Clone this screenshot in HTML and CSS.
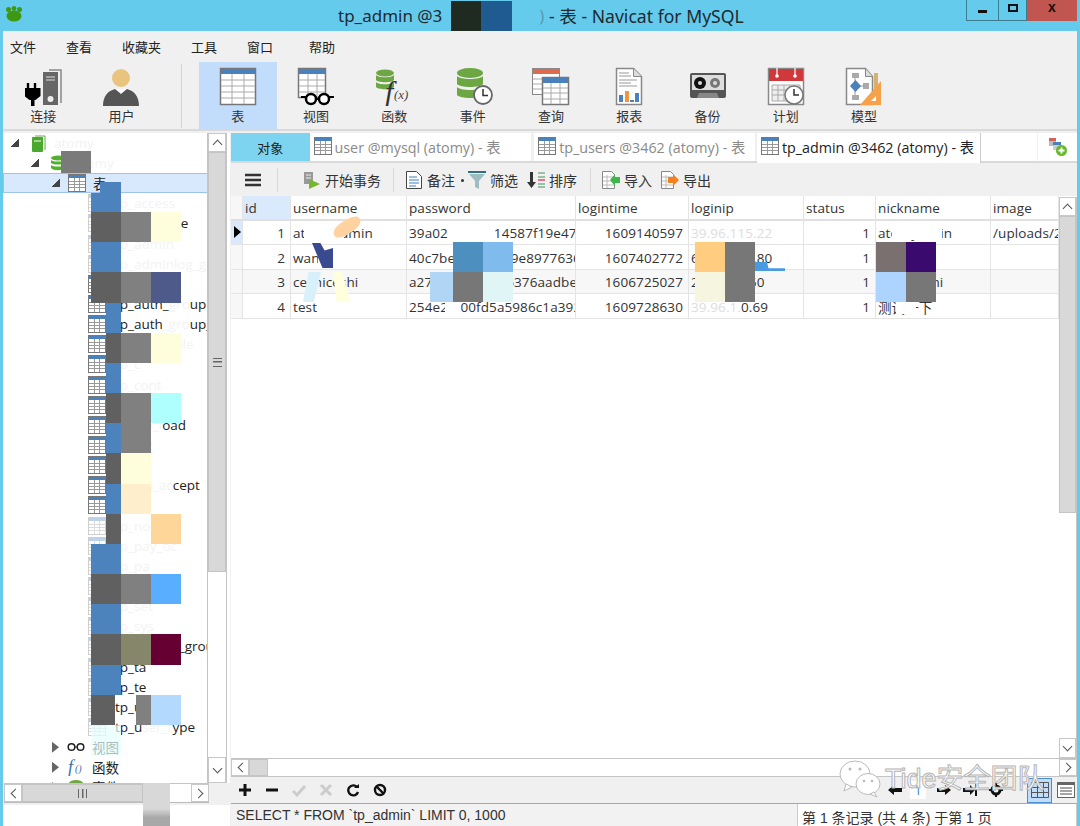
FILE: index.html
```html
<!DOCTYPE html>
<html lang="zh">
<head>
<meta charset="utf-8">
<title>tp_admin - Navicat for MySQL</title>
<link rel="stylesheet" href="styles.css">
</head>
<body>
<svg class="defs" width="0" height="0" aria-hidden="true">
  <symbol id="tbl" viewBox="0 0 18 18">
    <rect x=".5" y=".5" width="17" height="17" fill="#fff" stroke="#777"/>
    <rect x="1" y="1" width="16" height="3" fill="#4a80bb"/>
    <path d="M1 7.5h16M1 10.5h16M1 13.5h16M6.5 4v13M11.5 4v13" stroke="#999" fill="none"/>
  </symbol>
</svg>

<div class="window">
  <header class="titlebar">
    <svg class="applogo" width="18" height="16" viewBox="0 0 18 16"><ellipse cx="9" cy="10" rx="7.5" ry="5.5" fill="#3d9a10"/><circle cx="3.5" cy="3.5" r="2.5" fill="#3d9a10"/><circle cx="9" cy="2.5" r="2.4" fill="#3d9a10"/><circle cx="14.5" cy="3.5" r="2.5" fill="#3d9a10"/></svg>
    <div class="title"><span>tp_admin @3</span><i class="tpatch a"></i><i class="tpatch b"></i><span class="tfade">)</span><span class="ttail">&nbsp;- 表 - Navicat for MySQL</span></div>
    <div class="winbtns">
      <button class="wb min"><i></i></button>
      <button class="wb max"><i></i></button>
      <button class="wb close">x</button>
    </div>
  </header>

  <div class="shell">
    <nav class="menubar">
      <span>文件</span><span>查看</span><span>收藏夹</span><span>工具</span><span>窗口</span><span class="m-help">帮助</span>
    </nav>

    <div class="ribbon">
      <div class="rb"><svg class="ic-conn" width="40" height="40" viewBox="0 0 40 40"><path d="M24 4h12v33" fill="none" stroke="#888" stroke-width="1.5"/><rect x="18" y="6" width="15" height="33" fill="#666"/><path d="M21 11h9M21 14h9" stroke="#ddd"/><circle cx="25.500" cy="33" r="3" fill="#eee"/><path d="M3 17v6M10 17v6" stroke="#000" stroke-width="2.400"/><path d="M0 22h16v8l-5 4H5l-5-4z" fill="#000" transform="translate(-.5)"/><rect x="6" y="33" width="3.500" height="7" fill="#000"/></svg><span>连接</span></div>
      <div class="rb"><svg width="40" height="40" viewBox="0 0 40 40"><circle cx="20" cy="12" r="9" fill="#e8c47e"/><path d="M2 40c0-10 5-15 12-17l6 5 6-5c7 2 12 7 12 17z" fill="#555"/><path d="M14 22l6 5 6-5-6 2z" fill="#fff"/></svg><span>用户</span></div>
      <i class="rsep"></i>
      <div class="rb active"><svg width="40" height="40" viewBox="0 0 40 40"><rect x="2.500" y="2.500" width="35" height="36" fill="#fff" stroke="#777" stroke-width="1.500"/><rect x="3" y="3" width="34" height="5" fill="#4a80bb"/><path d="M3 14h34M3 20h34M3 26h34M3 32h34M14 8v30M26 8v30" stroke="#aaa"/></svg><span>表</span></div>
      <div class="rb"><svg width="40" height="40" viewBox="0 0 40 40"><rect x="2.500" y="2.500" width="27" height="29" fill="#fff" stroke="#777" stroke-width="1.500"/><rect x="3" y="3" width="26" height="5" fill="#4a80bb"/><path d="M3 14h26M3 20h26M3 26h26M12 8v24M21 8v24" stroke="#aaa"/><circle cx="15" cy="33" r="5" fill="#fff" stroke="#000" stroke-width="2.500"/><circle cx="28" cy="33" r="5" fill="#fff" stroke="#000" stroke-width="2.500"/><path d="M5 31h5M33 31h5M20 33h3" stroke="#000" stroke-width="2"/></svg><span>视图</span></div>
      <div class="rb"><svg width="40" height="40" viewBox="0 0 40 40"><ellipse cx="11" cy="7" rx="9" ry="3.500" fill="#6da744"/><path d="M2 9c2 3 16 3 18 0v5c-2 3-16 3-18 0z" fill="#6da744"/><path d="M2 16c2 3 16 3 18 0v5c-2 3-16 3-18 0z" fill="#6da744"/><text class="fx" x="11" y="36">f</text><text class="fxs" x="20" y="33">(x)</text></svg><span>函数</span></div>
      <div class="rb"><svg width="40" height="40" viewBox="0 0 40 40"><ellipse cx="17" cy="7" rx="13" ry="5" fill="#6da744"/><path d="M4 10c3 4 23 4 26 0v8c-3 4-23 4-26 0z" fill="#6da744"/><path d="M4 21c3 4 23 4 26 0v8c-3 4-23 4-26 0z" fill="#6da744"/><circle cx="30" cy="29" r="9" fill="#fff" stroke="#666" stroke-width="1.800"/><path d="M30 23v6.500h5" stroke="#333" stroke-width="1.500" fill="none"/></svg><span>事件</span></div>
      <div class="rb"><svg width="40" height="40" viewBox="0 0 40 40"><rect x="1.500" y="2.500" width="27" height="26" fill="#fff" stroke="#888"/><rect x="2" y="3" width="26" height="5" fill="#e06a50"/><path d="M2 13h10M2 18h10M2 23h10" stroke="#aaa"/><rect x="11.500" y="11.500" width="26" height="27" fill="#fff" stroke="#777" stroke-width="1.500"/><rect x="12" y="12" width="25" height="5" fill="#4a80bb"/><path d="M12 22h25M12 27h25M12 33h25M20 17v21M29 17v21" stroke="#aaa"/></svg><span>查询</span></div>
      <div class="rb"><svg width="40" height="40" viewBox="0 0 40 40"><path d="M7.500 2.500h17l8 8v28h-25z" fill="#fff" stroke="#888" stroke-width="1.500"/><path d="M24.500 2.500v8h8" fill="#ddd" stroke="#888"/><path d="M10 7h10M10 10h12M10 14h18M10 17h12M10 20h18" stroke="#999"/><rect x="10" y="29" width="4" height="7" fill="#4a80bb"/><rect x="16" y="25" width="4" height="11" fill="#f0953c"/><rect x="21" y="34" width="4" height="2" fill="#4a80bb"/><rect x="26" y="27" width="4" height="9" fill="#4a80bb"/></svg><span>报表</span></div>
      <div class="rb"><svg width="40" height="40" viewBox="0 0 40 40"><rect x="2" y="7" width="36" height="25" rx="2" fill="#555"/><rect x="4" y="9" width="32" height="15" fill="#ddd"/><circle cx="12" cy="17" r="6" fill="#111"/><circle cx="12" cy="17" r="2" fill="#ddd"/><circle cx="27" cy="17" r="5" fill="#777"/><circle cx="27" cy="17" r="2" fill="#ddd"/><path d="M9 32l2-5h18l2 5z" fill="#888"/></svg><span>备份</span></div>
      <div class="rb"><svg width="40" height="40" viewBox="0 0 40 40"><rect x="2.500" y="2.500" width="35" height="36" fill="#fff" stroke="#888" stroke-width="1.500"/><rect x="3" y="3" width="34" height="12" fill="#d0393c"/><circle cx="11" cy="10" r="1.800" fill="#fff"/><circle cx="29" cy="10" r="1.800" fill="#fff"/><path d="M11 2v7M29 2v7" stroke="#fff" stroke-width="1.200"/><path d="M6 19h28v16H6zM6 24h28M6 29h28M12 19v16M18 19v16M24 19v16" fill="#eee" stroke="#aaa"/><circle cx="28" cy="29" r="9" fill="#fff" stroke="#777" stroke-width="1.500"/><path d="M28 23v6h5" stroke="#333" stroke-width="1.500" fill="none"/></svg><span>计划</span></div>
      <div class="rb"><svg width="40" height="40" viewBox="0 0 40 40"><path d="M2.500 2.500h19l7 8v28h-26z" fill="#fff" stroke="#888" stroke-width="1.500"/><path d="M21.500 2.500v8h7" fill="#ddd" stroke="#888"/><rect x="8" y="7" width="7" height="5" fill="#aaa"/><rect x="8" y="29" width="7" height="5" fill="#aaa"/><rect x="19" y="17" width="6" height="6" fill="#aaa"/><path d="M11 12v17M14 20h6" stroke="#999"/><path d="M11.500 14l5.500 6-5.500 6-5.500-6z" fill="#4a80bb"/><rect x="30" y="7" width="4" height="20" fill="#d6b070"/><path d="M37 15v24H16z" fill="#f6a24a"/><path d="M32 30v5h-5z" fill="#fff"/></svg><span>模型</span></div>
    </div>

    <main class="workspace">
      <aside class="side">
        <div class="side-top">
          <div class="tree">
            <div class="node l0"><i class="tw"></i><svg width="15" height="17" viewBox="0 0 15 17"><path d="M4 1h10v14" fill="none" stroke="#5fae3c"/><rect x="1" y="2" width="11" height="15" rx="1" fill="#4aa82c"/><path d="M3 6h7" stroke="#fff"/></svg><span class="hid">atomy</span></div>
            <div class="node l1"><i class="tw"></i><svg width="16" height="17" viewBox="0 0 16 17"><ellipse cx="8" cy="3" rx="7" ry="2.600" fill="#54b030"/><path d="M1 5c2 2 12 2 14 0v3c-2 2-12 2-14 0zM1 10c2 2 12 2 14 0v3c-2 3-12 3-14 0z" fill="#54b030"/></svg><span class="hid">atomy</span></div>
            <div class="node l2 sel"><i class="tw"></i><svg width="18" height="18"><use href="#tbl"/></svg><span>表</span></div>
            <div class="kids">
              <div class="node l3"><svg class="dim" width="18" height="18"><use href="#tbl"/></svg><span class="hid">tp_access</span></div>
              <div class="node l3"><svg class="dim" width="18" height="18"><use href="#tbl"/></svg><span>tp_access_e</span></div>
              <div class="node l3"><svg class="dim" width="18" height="18"><use href="#tbl"/></svg><span class="hid">tp_admin</span></div>
              <div class="node l3"><svg class="dim" width="18" height="18"><use href="#tbl"/></svg><span class="hid">tp_adminlog_g</span></div>
              <div class="node l3"><svg width="18" height="18"><use href="#tbl"/></svg><span class="hid">tp_adm</span></div>
              <div class="node l3"><svg width="18" height="18"><use href="#tbl"/></svg><span>tp_auth_</span><span class="hid">gro</span><span>up</span></div>
              <div class="node l3"><svg width="18" height="18"><use href="#tbl"/></svg><span>tp_auth</span><span class="hid">_gro</span><span>up_access</span></div>
              <div class="node l3"><svg width="18" height="18"><use href="#tbl"/></svg><span>tp_auth</span><span class="hid">_rule</span></div>
              <div class="node l3"><svg width="18" height="18"><use href="#tbl"/></svg><span class="hid">tp_c</span></div>
              <div class="node l3"><svg width="18" height="18"><use href="#tbl"/></svg><span class="hid">tp_cont</span></div>
              <div class="node l3"><svg width="18" height="18"><use href="#tbl"/></svg><span class="hid">tp_dept</span></div>
              <div class="node l3"><svg width="18" height="18"><use href="#tbl"/></svg><span class="hid">tp_file_l</span><span>oad</span></div>
              <div class="node l3"><svg width="18" height="18"><use href="#tbl"/></svg><span class="hid">tp_log</span></div>
              <div class="node l3"><svg width="18" height="18"><use href="#tbl"/></svg><span class="hid">tp_m</span></div>
              <div class="node l3"><svg width="18" height="18"><use href="#tbl"/></svg><span class="hid">tp_ms_ac</span><span>cept</span></div>
              <div class="node l3"><svg width="18" height="18"><use href="#tbl"/></svg><span class="hid">tp_n</span></div>
              <div class="node l3"><svg class="dim" width="18" height="18"><use href="#tbl"/></svg><span class="hid">tp_node_t</span></div>
              <div class="node l3"><svg class="dim" width="18" height="18"><use href="#tbl"/></svg><span class="hid">tp_pay_oc</span></div>
              <div class="node l3"><svg class="dim" width="18" height="18"><use href="#tbl"/></svg><span class="hid">tp_pa</span></div>
              <div class="node l3"><svg class="dim" width="18" height="18"><use href="#tbl"/></svg><span class="hid">tp_s</span></div>
              <div class="node l3"><svg class="dim" width="18" height="18"><use href="#tbl"/></svg><span class="hid">tp_set</span></div>
              <div class="node l3"><svg class="dim" width="18" height="18"><use href="#tbl"/></svg><span class="hid">tp_sys</span></div>
              <div class="node l3"><svg class="dim" width="18" height="18"><use href="#tbl"/></svg><span>tp_sys_lan_group</span></div>
              <div class="node l3"><svg class="dim" width="18" height="18"><use href="#tbl"/></svg><span>tp_ta</span></div>
              <div class="node l3"><svg class="dim" width="18" height="18"><use href="#tbl"/></svg><span>tp_te</span></div>
              <div class="node l3"><svg class="dim" width="18" height="18"><use href="#tbl"/></svg><span>tp_u</span></div>
              <div class="node l3"><svg class="dim" width="18" height="18"><use href="#tbl"/></svg><span>tp_u</span><span class="hid">ser_t</span><span>ype</span></div>
            </div>
            <div class="node l2"><i class="tw open"></i><svg width="18" height="10" viewBox="0 0 18 10"><circle cx="4.500" cy="5" r="3.300" fill="none" stroke="#222" stroke-width="1.500"/><circle cx="13.500" cy="5" r="3.300" fill="none" stroke="#222" stroke-width="1.500"/><path d="M8 5h2" stroke="#222"/></svg><span>视图</span></div>
            <div class="node l2"><i class="tw open"></i><svg width="18" height="18" viewBox="0 0 18 18"><text class="fxt" x="1" y="15">f</text><text class="fxb" x="8" y="14">()</text></svg><span>函数</span></div>
            <div class="node l2"><i class="tw open"></i><svg width="18" height="18" viewBox="0 0 18 18"><ellipse cx="9" cy="5" rx="7" ry="3" fill="#6da744"/><path d="M2 7c2 3 12 3 14 0v8H2z" fill="#6da744"/></svg><span>事件</span></div>
          </div>
          <div class="vbar tree-vbar">
            <button class="sb-btn up"></button>
            <div class="thumb tree-thumb"><i class="grip"></i></div>
            <div class="track"></div>
            <button class="sb-btn down"></button>
          </div>
        </div>
        <div class="hbar side-hbar">
          <button class="sb-btn left"></button>
          <div class="hthumb side-thumb"><i class="hgrip"></i></div>
          <div class="track"></div>
          <button class="sb-btn right"></button>
        </div>
        <div class="side-foot"></div>
      </aside>

      <section class="content">
        <div class="tabs">
          <div class="tab obj">对象</div>
          <div class="tab doc t1"><svg width="18" height="18"><use href="#tbl"/></svg><span>user @mysql (atomy) - 表</span></div>
          <div class="tab doc t2"><svg width="18" height="18"><use href="#tbl"/></svg><span>tp_users @3462 (atomy) - 表</span></div>
          <div class="tab doc t3 current"><svg width="18" height="18"><use href="#tbl"/></svg><span>tp_admin @3462 (atomy) - 表</span></div>
          <div class="tab blank"></div>
          <div class="tab add"><svg width="20" height="20" viewBox="0 0 20 20"><rect x="1" y="1" width="7" height="3" fill="#d0605a"/><rect x="1" y="4" width="7" height="5" fill="#bbb"/><rect x="5" y="5" width="8" height="3" fill="#4a80bb"/><rect x="5" y="8" width="8" height="5" fill="#ccc"/><circle cx="13.500" cy="13.500" r="5.500" fill="#66b82c"/><path d="M13.500 10.500v6M10.500 13.500h6" stroke="#fff" stroke-width="1.800"/></svg></div>
        </div>

        <div class="tools">
          <svg class="ham" width="16" height="14" viewBox="0 0 16 14"><path d="M0 2h16M0 7h16M0 12h16" stroke="#333" stroke-width="2.600"/></svg>
          <i class="tsep s1"></i>
          <div class="tool tx"><svg width="18" height="18" viewBox="0 0 18 18"><rect x="1" y="1" width="9" height="12" fill="#999"/><path d="M3 4h5M3 7h5" stroke="#eee"/><path d="M6 8l11 5-11 5z" fill="#74b72a"/></svg><span>开始事务</span></div>
          <i class="tsep s2"></i>
          <div class="tool note"><svg width="16" height="18" viewBox="0 0 16 18"><path d="M.5.500h10l5 5v12H.500z" fill="#fff" stroke="#444"/><path d="M3 6h8M3 9h10M3 12h10M3 15h7" stroke="#3b7fc4"/></svg><span>备注</span><i class="dot"></i></div>
          <div class="tool filter"><svg width="18" height="18" viewBox="0 0 18 18"><rect width="18" height="2" fill="#2f6f83"/><path d="M1 3h16l-6 7v8l-4-2v-6z" fill="#9dbdc0"/></svg><span>筛选</span></div>
          <div class="tool sort"><svg width="18" height="18" viewBox="0 0 18 18"><path d="M3 1h3v10h3l-4.500 6L0 11h3z" fill="#333"/><path d="M11 2h7M11 6h7" stroke="#7fb08c" stroke-width="1.500"/><path d="M11 9h7" stroke="#e0506a" stroke-width="1.500"/><path d="M11 13h7M11 16h7" stroke="#7fb08c" stroke-width="1.500"/></svg><span>排序</span></div>
          <i class="tsep s3"></i>
          <div class="tool imp"><svg width="18" height="18" viewBox="0 0 18 18"><path d="M.500.500h9l3 3v14H.500z" fill="#fff" stroke="#888"/><path d="M1 6h11M1 10h11M1 14h11M5 4v13" stroke="#bbb"/><path d="M18 6v6h-5v3l-5-6 5-6v3z" fill="#3fb54a"/></svg><span>导入</span></div>
          <div class="tool exp"><svg width="18" height="18" viewBox="0 0 18 18"><path d="M.500.500h9l3 3v14H.500z" fill="#fff" stroke="#888"/><path d="M1 6h11M1 10h11M1 14h11M5 4v13" stroke="#bbb"/><path d="M7 6v6h5v3l6-6-6-6v3z" fill="#f5801f"/></svg><span>导出</span></div>
        </div>

        <div class="gridwrap">
          <div class="grid">
            <div class="gh rowh"></div><div class="gh idh">id</div><div class="gh">username</div><div class="gh">password</div><div class="gh">logintime</div><div class="gh">loginip</div><div class="gh">status</div><div class="gh">nickname</div><div class="gh">image</div>

            <div class="gc rowh cur"><i class="arrow"></i></div><div class="gc num">1</div><div class="gc">atom_admin</div><div class="gc">39a02a7c91d14587f19e47c0</div><div class="gc num">1609140597</div><div class="gc faint">39.96.115.22</div><div class="gc num">1</div><div class="gc">atomy_adin</div><div class="gc">/uploads/20</div>

            <div class="gc rowh"></div><div class="gc num">2</div><div class="gc">wangyi.</div><div class="gc">40c7be2d1a03b9e8977636a1</div><div class="gc num">1607402772</div><div class="gc">60.12.130.80</div><div class="gc num">1</div><div class="gc">wangyi</div><div class="gc"></div>

            <div class="gc rowh alt"></div><div class="gc num alt">3</div><div class="gc alt">ceshiceshi</div><div class="gc alt">a27ed8a6fc5286376aadbe0c</div><div class="gc num alt">1606725027</div><div class="gc alt">27.21.10.60</div><div class="gc num alt">1</div><div class="gc alt">ceshiceshi</div><div class="gc alt"></div>

            <div class="gc rowh"></div><div class="gc num">4</div><div class="gc">test</div><div class="gc">254e2f700fd5a5986c1a392e</div><div class="gc num">1609728630</div><div class="gc"><span class="faint">39.96.1.</span>0.69</div><div class="gc num">1</div><div class="gc">测试一下</div><div class="gc"></div>
          </div>
          <div class="vbar grid-vbar">
            <button class="sb-btn up"></button>
            <div class="thumb grid-thumb"></div>
            <div class="track"></div>
            <button class="sb-btn down"></button>
          </div>
        </div>

        <div class="hbar grid-hbar">
          <button class="sb-btn left"></button>
          <div class="hthumb g-thumb"></div>
          <div class="track"></div>
          <button class="sb-btn right"></button>
        </div>

        <div class="nav">
          <svg class="nv" width="14" height="14" viewBox="0 0 14 14"><path d="M7 1v12M1 7h12" stroke="#111" stroke-width="3"/></svg>
          <svg class="nv" width="14" height="14" viewBox="0 0 14 14"><path d="M1 7h12" stroke="#111" stroke-width="3"/></svg>
          <svg class="nv" width="14" height="14" viewBox="0 0 14 14"><path d="M1 8l4 4 8-9" stroke="#ccc" stroke-width="3" fill="none"/></svg>
          <svg class="nv" width="14" height="14" viewBox="0 0 14 14"><path d="M2 2l10 10M12 2L2 12" stroke="#ccc" stroke-width="3"/></svg>
          <svg class="nv" width="14" height="14" viewBox="0 0 14 14"><path d="M12 9a5 5 0 1 1-1-5" stroke="#111" stroke-width="2.400" fill="none"/><path d="M8 5h5V1z" fill="#111"/></svg>
          <svg class="nv" width="14" height="14" viewBox="0 0 14 14"><circle cx="7" cy="7" r="5" stroke="#111" stroke-width="2.400" fill="none"/><path d="M3.500 3.500l7 7" stroke="#111" stroke-width="2.400"/></svg>
          <div class="pager">
            <svg width="14" height="12" viewBox="0 0 14 12"><path d="M0 6l6-5v3h8v4H6v3z" fill="#111"/></svg>
            <span class="pno">1</span>
            <svg width="14" height="12" viewBox="0 0 14 12"><path d="M14 6L8 1v3H0v4h8v3z" fill="#111"/></svg>
            <svg width="14" height="12" viewBox="0 0 14 12"><path d="M12 6L7 1v3H0v4h7v3zM12 0h2v12h-2z" fill="#111"/></svg>
            <svg width="14" height="14" viewBox="0 0 14 14"><circle cx="7" cy="7" r="4" fill="none" stroke="#111" stroke-width="3"/><path d="M7 0v3M7 11v3M0 7h3M11 7h3" stroke="#111" stroke-width="2"/></svg>
          </div>
          <div class="views">
            <div class="vw grid-vw"><svg width="18" height="16" viewBox="0 0 18 16"><path d="M.500.500h17v15H.500zM.500 5.500h17M.500 10.500h17M6.500.500v15M12.500.500v15" fill="none" stroke="#555"/></svg></div>
            <div class="vw form-vw"><svg width="18" height="16" viewBox="0 0 18 16"><rect x=".5" y=".5" width="17" height="15" fill="#fff" stroke="#666"/><rect x="1" y="1" width="16" height="2" fill="#666"/><path d="M3 6h12M3 9h12M3 12h12" stroke="#888" stroke-width="1.500"/></svg></div>
          </div>
        </div>

        <footer class="status">
          <div class="sql">SELECT * FROM `tp_admin` LIMIT 0, 1000</div>
          <div class="rec">第 1 条记录 (共 4 条) 于第 1 页</div>
        </footer>
      </section>
    </main>
  </div>

  <div class="mosaic-db"></div>
  <div class="mosaic-tree">
    <i class="blue-top"></i><i></i><i></i>
    <i class="dark"></i><i class="gray"></i><i class="lemon"></i>
    <i class="blue"></i><i></i><i></i>
    <i class="dark"></i><i class="gray"></i><i class="navy"></i>
    <i class="hblue"></i><i></i><i></i>
    <i class="hdark"></i><i class="gray"></i><i class="lemon"></i>
    <i class="hblue"></i><i></i><i></i>
    <i class="hdark"></i><i class="gray"></i><i class="aqua"></i>
    <i class="hblue"></i><i class="gray"></i><i></i>
    <i class="hdark"></i><i class="lemon"></i><i></i>
    <i class="hblue"></i><i class="cream"></i><i></i>
    <i class="hdark"></i><i></i><i class="peach"></i>
    <i class="blue"></i><i></i><i></i>
    <i class="dark"></i><i class="gray"></i><i class="sky"></i>
    <i class="blue"></i><i></i><i></i>
    <i class="dark"></i><i class="olive"></i><i class="maroon"></i>
    <i class="blue"></i><i></i><i></i>
    <i class="dark-l"></i><i class="gray-r"></i><i class="pale"></i>
    <i class="ice"></i><i></i><i></i>
  </div>
  <div class="mosaic-foot"></div>

  <div class="cover c-user1"></div>
  <div class="cover c-user2"></div>
  <div class="blob b-orange"></div>
  <div class="blob b-indigo"></div>
  <div class="blob b-lblue"></div>
  <div class="blob b-lyellow"></div>
  <div class="cover c-pw1"></div>
  <div class="cover c-pw4"></div>
  <div class="cover c-nick4"></div>
  <div class="cover c-nick1"></div>
  <div class="mosaic-pw">
    <i class="p-sea"></i><i class="p-sky"></i><i class="p-none"></i>
    <i class="p-lb"></i><i class="p-gray"></i><i class="p-mint"></i>
  </div>
  <div class="mosaic-ip">
    <i class="i-org"></i><i class="i-gray"></i>
    <i class="i-egg"></i><i class="i-gray"></i>
  </div>
  <div class="blob b-ipblue"></div>
  <div class="mosaic-nick">
    <i class="n-gray"></i><i class="n-violet"></i>
    <i class="n-lb"></i><i class="n-gray2"></i>
  </div>

  <div class="watermark">
    <svg width="44" height="40" viewBox="0 0 44 40"><ellipse cx="17" cy="15" rx="15" ry="13" fill="#fff" stroke="#bbb"/><path d="M8 25l-2 7 8-4z" fill="#fff" stroke="#bbb"/><ellipse cx="30" cy="25" rx="12" ry="10.500" fill="#fff" stroke="#bbb"/><path d="M36 33l3 5-7-3z" fill="#fff" stroke="#bbb"/><circle cx="12" cy="10" r="1.500" fill="#bbb"/><circle cx="22" cy="10" r="1.500" fill="#bbb"/><circle cx="26" cy="22" r="1.300" fill="#bbb"/><circle cx="34" cy="22" r="1.300" fill="#bbb"/></svg>
    <span>Tide安全团队</span>
  </div>
</div>
</body>
</html>
```

FILE: styles.css
```css
* { box-sizing: border-box; }
html, body { margin: 0; padding: 0; }
body {
  width: 1080px;
  height: 826px;
  overflow: hidden;
  font-family: "Open Sans", "Noto Sans CJK SC", sans-serif;
  font-size: 14px;
  color: #222;
}
.defs { position: absolute; }
.window {
  position: relative;
  width: 1080px;
  height: 826px;
  background: #65cbec;
  display: flex;
  flex-direction: column;
  overflow: hidden;
}

/* title bar */
.titlebar {
  height: 31px;
  flex: none;
  display: flex;
  align-items: flex-start;
  padding-left: 5px;
}
.applogo { margin-top: 6px; flex: none; }
.title {
  display: flex;
  align-items: center;
  height: 31px;
  margin-left: 315px;
  font-family: "Noto Sans", "Noto Sans CJK SC", sans-serif;
  font-size: 17px;
  color: #1d2a30;
  white-space: nowrap;
}
.tpatch { display: block; height: 30px; width: 30px; }
.tpatch.a { background: #1f2a20; margin-left: 9px; }
.tpatch.b { background: #1f5a91; width: 31px; }
.tfade { margin-left: 27px; color: #5a9ab4; }
.ttail { font-size: 17.600px; }
.winbtns { display: flex; margin-left: auto; margin-right: 3px; align-items: flex-start; }
.wb {
  display: flex;
  align-items: center;
  justify-content: center;
  height: 21px;
  padding: 0 0 4px;
  border: 1px solid #3c7b90;
  border-top: 0;
  background: transparent;
  font-family: "Liberation Sans", sans-serif;
  font-weight: 700;
  font-size: 14px;
  color: #111;
}
.wb.min { width: 33px; }
.wb.min i { display: block; width: 9px; height: 3px; background: #111; margin-top: 7px; }
.wb.max { width: 28px; border-left: 0; }
.wb.max i { display: block; width: 10px; height: 8px; border: 2px solid #111; }
.wb.close { width: 50px; background: #c0564f; border: 0; padding-bottom: 7px; }

/* shell */
.shell {
  flex: 1;
  margin: 0 3px;
  background: #f0f0f0;
  display: flex;
  flex-direction: column;
  min-height: 0;
}
.menubar {
  height: 31px;
  flex: none;
  display: flex;
  align-items: center;
  gap: 30px;
  padding-left: 7px;
  font-size: 13px;
  font-family: "Noto Sans CJK SC", sans-serif;
  color: #222;
}
.m-help { margin-left: 6px; }

.ribbon {
  height: 69px;
  flex: none;
  display: flex;
  padding-left: 1px;
  border-bottom: 2px solid #d9d9d9;
}
.rb {
  width: 78.300px;
  height: 67px;
  display: flex;
  flex-direction: column;
  align-items: center;
  font-family: "Noto Sans CJK SC", sans-serif;
  font-size: 13px;
  color: #333;
  line-height: 18px;
  padding-top: 4px;
}
.rb svg { height: 40px; margin-bottom: 1px; }
.rb .ic-conn { margin-left: 3px; }
.rb.active { background: #c2dcfb; }
.rsep { width: 1px; height: 64px; margin: 2px 17px 0 20px; background: #d4d4d4; display: block; }
.fx { font-family: "Liberation Serif", serif; font-style: italic; font-size: 30px; fill: #333; }
.fxs { font-family: "Liberation Serif", serif; font-style: italic; font-size: 13px; fill: #444; }
.fxt { font-family: "Liberation Serif", serif; font-style: italic; font-size: 18px; fill: #3a6fa8; }
.fxb { font-family: "Liberation Serif", serif; font-style: italic; font-size: 10px; fill: #3a6fa8; }

/* workspace */
.workspace { flex: 1; display: flex; min-height: 0; }
.side { width: 227px; flex: none; display: flex; flex-direction: column; padding-top: 2px; }
.side-top { height: 650px; flex: none; display: flex; background: #fff; }
.tree { width: 205px; flex: none; overflow: hidden; background: #fff; border-right: 1px solid #c4c4c4; }
.node {
  height: 20.150px;
  display: flex;
  align-items: center;
  white-space: nowrap;
  font-size: 13.500px;
  color: #222;
  overflow: hidden;
  font-family: "Open Sans", "Noto Sans CJK SC", sans-serif;
}
.node svg { flex: none; }
.l0 { padding-left: 8px; }
.l0 svg { margin-left: 12px; margin-right: 8px; }
.l1 { padding-left: 28px; }
.l1 svg { margin-left: 11px; margin-right: 8px; }
.l2 { padding-left: 49px; }
.l2 svg { margin-left: 8px; margin-right: 7px; }
.l3 { padding-left: 85px; }
.l3 svg { margin-right: 9px; }
.sel { background: #d9e9fd; border: 1px solid #9dc3ec; border-right: 0; height: 20px; padding-left: 48px; }
.kids { margin-top: 0; }
.tw {
  display: block;
  flex: none;
  width: 8px;
  height: 8px;
  background: linear-gradient(135deg, transparent 50%, #444 50%);
}
.tw.open {
  width: 7px;
  height: 11px;
  clip-path: polygon(0 0, 100% 50%, 0 100%);
  background: linear-gradient(#666, #666);
}
.hid { color: #f3f3f3; }
.dim { opacity: .35; }

/* scrollbars */
.vbar { display: flex; flex-direction: column; background: #fff; border-right: 1px solid #c4c4c4; flex: none; }
.tree-vbar { width: 19px; }
.track { flex: 1; background: #fff; }
.sb-btn { border: 1px solid #c8c8c8; background: #fff; padding: 0; display: flex; align-items: center; justify-content: center; flex: none; }
.sb-btn::before { content: ""; width: 6px; height: 6px; border: solid #555; border-width: 1.500px 0 0 1.500px; }
.sb-btn.up { height: 19px; }
.sb-btn.up::before { transform: translateY(2px) rotate(45deg); }
.sb-btn.down { height: 26px; }
.sb-btn.down::before { transform: translateY(-2px) rotate(225deg); }
.sb-btn.left { width: 18px; }
.sb-btn.left::before { transform: translateX(2px) rotate(-45deg); }
.sb-btn.right { width: 18px; }
.sb-btn.right::before { transform: translateX(-2px) rotate(135deg); }
.thumb { background: #d8d8d8; display: flex; align-items: center; justify-content: center; border: 1px solid #c4c4c4; flex: none; }
.tree-thumb { height: 420px; }
.grip { display: block; width: 9px; height: 9px; border-top: 1.500px solid #666; border-bottom: 1.500px solid #666; background: linear-gradient(#666, #666) center / 100% 1.500px no-repeat; }
.hbar { display: flex; background: #fff; flex: none; }
.side-hbar { height: 20px; width: 205px; margin-left: 1px; border-top: 1px solid #c4c4c4; border-bottom: 1px solid #bbb; }
.hthumb { background: #d8d8d8; border: 1px solid #c4c4c4; display: flex; align-items: center; justify-content: center; flex: none; }
.side-thumb { width: 121px; }
.hgrip { display: block; width: 9px; height: 9px; border-left: 1.500px solid #666; border-right: 1.500px solid #666; background: linear-gradient(#666, #666) center / 1.500px 100% no-repeat; }
.side-foot { flex: 1; background: #fff; margin-top: 2px; }

/* tabs */
.content { flex: 1; min-width: 0; display: flex; flex-direction: column; padding-left: 1px; padding-top: 2px; }
.tabs { height: 30px; flex: none; display: flex; border-bottom: 2px solid #d9d9d9; padding-left: 0; }
.tab { height: 28px; display: flex; align-items: center; padding-bottom: 2px; background: #fff; white-space: nowrap; font-size: 14.300px; color: #8a8a8a; gap: 3px; padding-left: 4px; overflow: hidden; }
.tab.obj { width: 79px; padding: 0; justify-content: center; background: #7dd4f0; color: #222; font-size: 13px; }
.tab.t1 { width: 223px; padding-left: 4px; }
.tab.t2 { width: 222px; margin-left: 3px; }
.tab.t3 { width: 225px; margin-left: 2px; color: #222; border-right: 1px solid #ccc; height: 30px; padding-bottom: 4px; }
.tab.blank { width: 57px; }
.tab.add { width: 39px; margin-left: 1px; justify-content: center; padding: 0; }

/* toolbar */
.tools { height: 33px; flex: none; display: flex; align-items: center; padding-left: 14px; padding-top: 1px; font-size: 14px; font-family: "Noto Sans CJK SC", sans-serif; }
.ham { flex: none; }
.tsep { display: block; width: 1px; height: 24px; background: #d8d8d8; flex: none; }
.s1 { margin-left: 16px; }
.s2 { margin-left: 12px; }
.s3 { margin-left: 13px; }
.tool { display: flex; align-items: center; gap: 4px; white-space: nowrap; color: #333; }
.tool svg { flex: none; }
.tx { margin-left: 25px; }
.note { margin-left: 12px; gap: 5px; }
.dot { display: block; width: 3px; height: 3px; background: #333; margin-left: 1px; border-radius: 50%; }
.filter { margin-left: 4px; }
.sort { margin-left: 9px; }
.imp { margin-left: 11px; }
.exp { margin-left: 9px; }

/* data grid */
.gridwrap { height: 562px; flex: none; display: flex; background: #fff; }
.grid {
  width: 828px;
  flex: none;
  display: grid;
  grid-template-columns: 12px 48px 116px 169px 113px 115px 72px 115px 68px;
  grid-auto-rows: 24.500px;
  align-content: start;
  font-size: 13.500px;
  font-family: "Open Sans", "Noto Sans CJK SC", sans-serif;
  color: #333;
  letter-spacing: .1px;
}
.gh, .gc {
  display: flex;
  align-items: center;
  padding: 2px 2px 0;
  border-right: 1px solid #e4e4e4;
  border-bottom: 1px solid #e4e4e4;
  white-space: nowrap;
  overflow: hidden;
  background: #fff;
}
.gc.num { justify-content: flex-end; padding-right: 5px; }
.gc.alt { background: #f7f7f7; }
.gc.rowh { padding: 0; background: #f7f7f7; }
.gc.rowh.cur { background: #d9e9fd; }
.gh.rowh { background: #f7f7f7; }
.gh.idh { background: #daeafc; }
.gh { border-bottom: 2px solid #e0e0e0; }
.arrow { display: block; width: 0; height: 0; margin-left: 3px; border-style: solid; border-width: 6px 0 6px 7px; border-color: transparent transparent transparent #000; }
.faint { color: #ddd; }

.grid-vbar { width: 18px; margin-top: 1px; }
.grid-vbar .sb-btn.up { height: 19px; }
.grid-vbar .sb-btn.down { height: 20px; }
.grid-thumb { height: 297px; }
.grid-hbar { height: 19px; border-top: 1px solid #c4c4c4; border-bottom: 1px solid #c4c4c4; width: 846px; }
.g-thumb { width: 19px; }

/* bottom nav */
.nav { height: 26px; flex: none; display: flex; align-items: center; padding-left: 7px; gap: 13px; }
.nv { flex: none; }
.pager { display: flex; align-items: center; gap: 12px; margin-left: 488px; flex: none; }
.pno { width: 16px; margin: 0 -1px 0 -4px; text-align: center; font-size: 13px; color: #3b7fc4; background: #fff; }
.views { display: flex; align-items: center; gap: 4px; margin-left: 11px; flex: none; }
.vw { display: flex; align-items: center; justify-content: center; width: 25px; height: 25px; }
.grid-vw { background: #c2dcfb; border: 1px solid #4a90d0; }
.form-vw { width: 20px; }

/* status */
.status { flex: 1; display: flex; border-top: 1px solid #a8a8a8; background: #fff; font-size: 14px; font-family: "Liberation Sans", "Noto Sans CJK SC", sans-serif; color: #333; }
.sql { width: 567px; padding: 3px 0 0 5px; border-right: 1px solid #ccc; flex: none; background: #f2f2f2; }
.rec { flex: 1; padding: 3px 0 0 4px; border-right: 1px solid #ccc; }

/* redaction mosaics, over the content */
.mosaic-tree {
  position: absolute;
  left: 91px;
  top: 182px;
  width: 90px;
  display: grid;
  grid-template-columns: repeat(3, 30px);
  grid-auto-rows: 30.170px;
}
.mosaic-tree i { display: block; }
.blue { background: #4d83bd; }
.blue-top { background: linear-gradient(90deg, transparent 30%, #4d83bd 30%) 0 0 / 100% 11px no-repeat, linear-gradient(#4d83bd, #4d83bd) 0 11px / 100% 100% no-repeat; }
.hblue { background: linear-gradient(90deg, transparent 50%, #4d83bd 50%); }
.dark { background: #606060; }
.dark-l { background: linear-gradient(90deg, #606060 80%, transparent 80%); }
.hdark { background: linear-gradient(90deg, transparent 50%, #606060 50%); }
.gray { background: #808080; }
.gray-r { background: linear-gradient(90deg, transparent 50%, #808080 50%); }
.olive { background: #86866a; }
.lemon { background: #fefedd; }
.navy { background: #4e5a8a; }
.aqua { background: #b0ffff; }
.cream { background: #ffeecb; }
.peach { background: #ffd699; }
.sky { background: #5aaeff; }
.maroon { background: #660033; }
.pale { background: #b3d9ff; }
.ice { background: rgba(230, 255, 255, .7); }
.mosaic-db { position: absolute; left: 61px; top: 151px; width: 30px; height: 22px; background: #7a7a7a; }
.mosaic-foot { position: absolute; left: 143px; top: 783px; width: 27px; height: 43px; background: linear-gradient(#d8d8d8 60%, #a8a8a8 80%); }

.cover { position: absolute; background: #fff; }
.c-user1 { left: 304px; top: 226px; width: 40px; height: 15px; }
.c-user2 { left: 318px; top: 250px; width: 36px; height: 16px; }
.c-pw1 { left: 448px; top: 226px; width: 46px; height: 15px; }
.c-pw4 { left: 445px; top: 302px; width: 16px; height: 13px; }
.c-nick4 { left: 896px; top: 300px; width: 20px; height: 14px; }
.c-nick1 { left: 892px; top: 226px; width: 50px; height: 14px; }
.blob { position: absolute; }
.b-orange { left: 332px; top: 220px; width: 30px; height: 14px; background: #ffd2a0; border-radius: 60% 30% 60% 30%; transform: rotate(-25deg); }
.b-indigo { left: 312px; top: 243px; width: 21px; height: 25px; background: #3a4a90; clip-path: polygon(0 0, 40% 0, 60% 30%, 100% 20%, 100% 100%, 50% 100%); }
.b-lblue { left: 303px; top: 272px; width: 18px; height: 30px; background: #d8f0fa; clip-path: polygon(30% 0, 100% 0, 60% 100%, 0 100%); }
.b-lyellow { left: 333px; top: 272px; width: 18px; height: 30px; background: #ffffdd; clip-path: polygon(0 0, 50% 0, 100% 100%, 20% 100%); }
.b-ipblue { left: 755px; top: 262px; width: 30px; height: 9px; background: #4a9ae0; clip-path: polygon(0 0, 40% 0, 45% 70%, 100% 70%, 100% 100%, 0 100%); }
.mosaic-pw {
  position: absolute;
  left: 430px;
  top: 242px;
  display: grid;
  grid-template-columns: 23px 30px 30px 22px;
  grid-auto-rows: 30px;
}
.mosaic-pw .p-sea { grid-column: 2; background: #4d90c0; }
.mosaic-pw .p-sky { grid-column: 3; background: #80bbee; }
.mosaic-pw .p-none { display: none; }
.mosaic-pw .p-lb { grid-column: 1; background: #b0d5f5; }
.mosaic-pw .p-gray { grid-column: 2; background: #777; }
.mosaic-pw .p-mint { grid-column: 3; background: #e0f5f5; }
.mosaic-ip {
  position: absolute;
  left: 695px;
  top: 242px;
  display: grid;
  grid-template-columns: 30px 30px;
  grid-auto-rows: 30px;
}
.i-org { background: #ffcc80; }
.i-gray { background: #777; }
.i-egg { background: #f5f5e0; }
.mosaic-nick {
  position: absolute;
  left: 876px;
  top: 242px;
  display: grid;
  grid-template-columns: 30px 30px;
  grid-auto-rows: 30px;
}
.n-gray { background: #7a7070; }
.n-violet { background: #3a0a6e; }
.n-lb { background: #add4ff; }
.n-gray2 { background: #777; }

.watermark {
  position: absolute;
  left: 838px;
  top: 759px;
  display: flex;
  align-items: center;
  gap: 3px;
  font-family: "Liberation Sans", "Noto Sans CJK SC", sans-serif;
  font-size: 27px;
  line-height: 40px;
  color: #fff;
  -webkit-text-stroke: 1px #b5b5b5;
  white-space: nowrap;
}
```
